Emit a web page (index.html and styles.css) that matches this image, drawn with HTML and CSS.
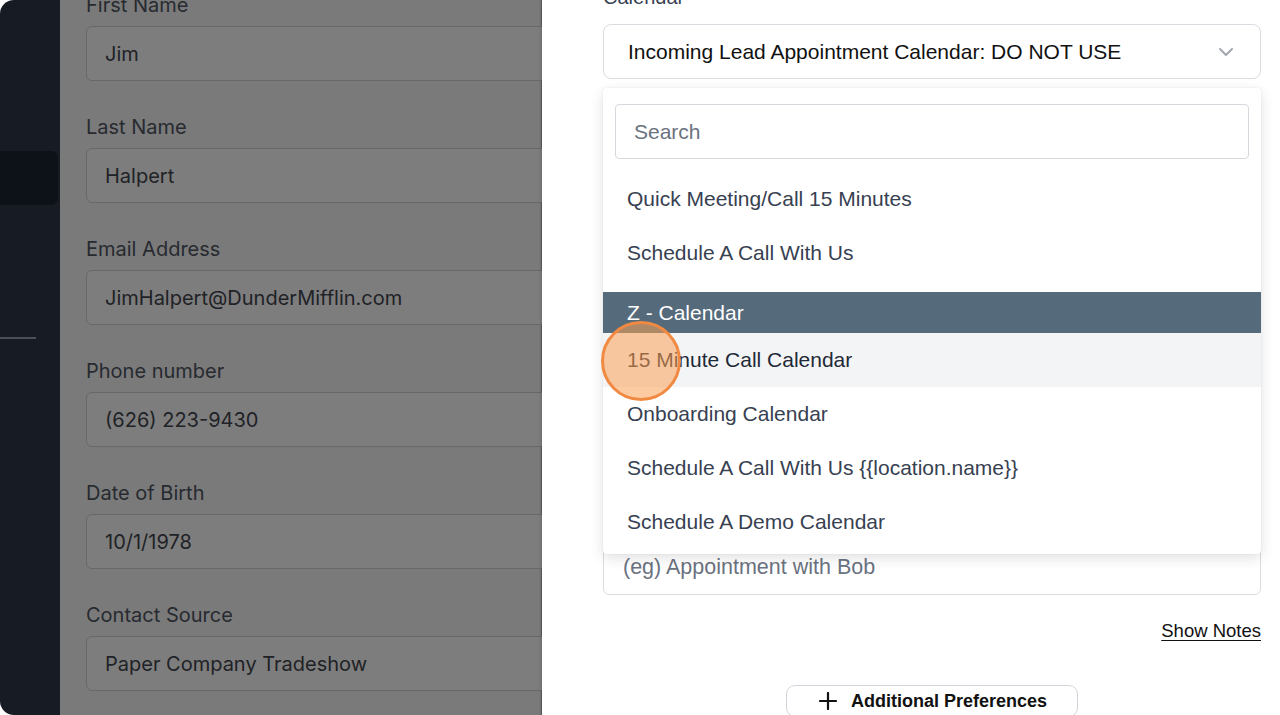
FILE: index.html
```html
<!DOCTYPE html>
<html lang="en">
<head>
<meta charset="utf-8">
<title>Book Appointment</title>
<link rel="stylesheet" href="styles.css">
</head>
<body>
<div class="app">
  <aside class="sidebar">
    <div class="nav-item active"></div>
    <div class="divider"></div>
  </aside>

  <main class="contact">
    <div class="field">
      <label class="label">First Name</label>
      <div class="input">Jim</div>
    </div>
    <div class="field">
      <label class="label">Last Name</label>
      <div class="input">Halpert</div>
    </div>
    <div class="field">
      <label class="label">Email Address</label>
      <div class="input">JimHalpert@DunderMifflin.com</div>
    </div>
    <div class="field">
      <label class="label">Phone number</label>
      <div class="input">(626) 223-9430</div>
    </div>
    <div class="field">
      <label class="label">Date of Birth</label>
      <div class="input">10/1/1978</div>
    </div>
    <div class="field">
      <label class="label">Contact Source</label>
      <div class="input">Paper Company Tradeshow</div>
    </div>
  </main>

  <section class="panel">
    <div class="calendar-field">
      <label class="panel-label">Calendar</label>
      <div class="select-wrap">
        <div class="select">
          <span>Incoming Lead Appointment Calendar: DO NOT USE</span>
          <svg class="chevron" width="16" height="10" viewBox="0 0 16 10"><path d="M2 2l6 6 6-6" fill="none" stroke="#a3a8af" stroke-width="2" stroke-linecap="round" stroke-linejoin="round"/></svg>
        </div>
        <div class="popup">
          <div class="search">Search</div>
          <ul class="options">
            <li class="option">Quick Meeting/Call 15 Minutes</li>
            <li class="option">Schedule A Call With Us</li>
            <li class="option gap"></li>
            <li class="option selected">Z - Calendar</li>
            <li class="option hover">15 Minute Call Calendar</li>
            <li class="option">Onboarding Calendar</li>
            <li class="option">Schedule A Call With Us {{location.name}}</li>
            <li class="option">Schedule A Demo Calendar</li>
          </ul>
        </div>
      </div>
    </div>

    <div class="title-field">
      <div class="text-input">(eg) Appointment with Bob</div>
    </div>

    <div class="notes-row"><a class="show-notes">Show Notes</a></div>

    <div class="prefs-row">
      <button class="prefs-btn">
        <svg width="18" height="18" viewBox="0 0 18 18"><path d="M9 1v16M1 9h16" stroke="#111" stroke-width="2.2" stroke-linecap="round"/></svg>
        <span>Additional Preferences</span>
      </button>
    </div>
  </section>

  <div class="click-marker"></div>
</div>
</body>
</html>
```
FILE: styles.css
```css
* { box-sizing: border-box; }
html, body { margin: 0; padding: 0; background: #ffffff; }
body { width: 1280px; height: 715px; overflow: hidden; }

.app {
  position: relative;
  width: 1280px;
  height: 715px;
  display: grid;
  grid-template-columns: 60px 482px 1fr;
  border-radius: 14px;
  overflow: hidden;
}

/* Sidebar */
.sidebar {
  background: #161b24;
  padding-top: 151px;
  display: flex;
  flex-direction: column;
}
.nav-item {
  width: 58px;
  height: 54px;
  border-radius: 0 7px 7px 0;
}
.nav-item.active { background: #0d1118; }
.divider {
  margin-top: 132px;
  width: 36px;
  height: 2px;
  background: #4a4f58;
}

/* Dimmed contact form */
.contact {
  background: #7a7a7a;
  padding: 0 0 0 26px;
  margin-top: -7px;
  display: flex;
  flex-direction: column;
  gap: 34px;
  font-family: Inter, "Noto Sans", sans-serif;
  border-right: 1px solid #5f5f5f;
}
.field { display: flex; flex-direction: column; }
.label {
  font-size: 20px;
  line-height: 24px;
  color: #272a30;
  margin-bottom: 9px;
}
.input {
  height: 55px;
  margin-right: -20px;
  border: 1px solid #686868;
  border-radius: 6px;
  background: #7d7d7d;
  padding: 0 18px;
  display: flex;
  align-items: center;
  font-size: 20px;
  color: #1f2226;
}

/* Right panel */
.panel {
  position: relative;
  z-index: 1;
  background: #ffffff;
  padding: 0 19px 0 61px;
  font-family: "Liberation Sans", Arial, sans-serif;
  box-shadow: -1px 0 3px rgba(0,0,0,0.15);
}
.calendar-field { margin-top: -15px; }
.panel-label {
  display: block;
  font-size: 20px;
  line-height: 24px;
  color: #374151;
  margin-bottom: 15px;
}
.select-wrap { position: relative; }
.select {
  height: 55px;
  border: 1px solid #d9dce1;
  border-radius: 8px;
  padding: 0 26px 0 24px;
  display: flex;
  align-items: center;
  justify-content: space-between;
  font-size: 21px;
  color: #111111;
  background: #fff;
}
.chevron { flex: none; }

.popup {
  position: absolute;
  left: 0;
  right: 0;
  top: 64px;
  z-index: 5;
  background: #ffffff;
  border-radius: 4px;
  box-shadow: 0 4px 14px rgba(0,0,0,0.12), 0 0 2px rgba(0,0,0,0.08);
  padding: 16px 0 5px;
}
.search {
  margin: 0 12px;
  height: 55px;
  border: 1px solid #d5d8dd;
  border-radius: 4px;
  padding: 0 18px;
  display: flex;
  align-items: center;
  font-size: 21px;
  color: #6b7280;
}
.options {
  list-style: none;
  margin: 13px 0 0;
  padding: 0;
}
.option {
  height: 54px;
  padding: 0 24px;
  display: flex;
  align-items: center;
  font-size: 21px;
  color: #374151;
}
.option:nth-child(2) { height: 53px; }
.option.gap { height: 13px; }
.option.selected {
  height: 41px;
  background: #556a7b;
  color: #ffffff;
}
.option.hover {
  background: #f3f4f6;
  color: #1f2937;
}

.title-field { margin-top: 461px; }
.text-input {
  height: 55px;
  border: 1px solid #d9dce1;
  border-radius: 6px;
  padding: 0 19px;
  display: flex;
  align-items: center;
  font-size: 21.5px;
  color: #6b7280;
}

.notes-row {
  display: flex;
  justify-content: flex-end;
  margin-top: 24px;
}
.show-notes {
  font-size: 18.5px;
  line-height: 24px;
  color: #111111;
  text-decoration: underline;
  text-underline-offset: 3px;
}
.prefs-row {
  display: flex;
  justify-content: center;
  margin-top: 42px;
}
.prefs-btn {
  height: 32px;
  padding: 0 30px 0 32px;
  display: flex;
  align-items: center;
  gap: 14px;
  border: 1px solid #d1d5db;
  border-radius: 9px;
  background: #fff;
  font-family: "Liberation Sans", Arial, sans-serif;
  font-size: 18px;
  font-weight: 700;
  color: #111111;
}

/* click marker */
.click-marker {
  position: absolute;
  left: 601px;
  top: 321px;
  width: 80px;
  height: 80px;
  border-radius: 50%;
  background: rgba(250, 160, 85, 0.55);
  border: 3px solid #f08a42;
  z-index: 10;
}
```
